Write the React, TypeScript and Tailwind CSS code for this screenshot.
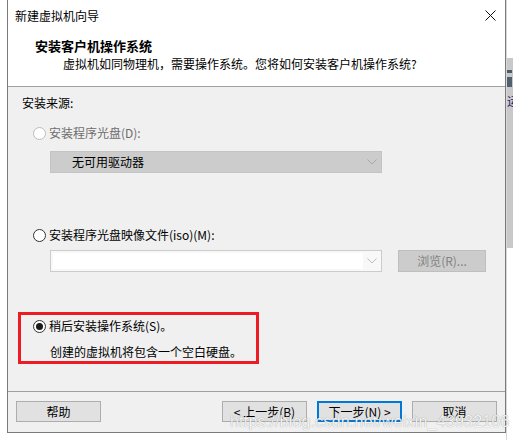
import React from 'react';

const font = "font-['Microsoft_YaHei_UI','Noto_Sans_CJK_SC',sans-serif]";

function Radio({ checked, disabled }: { checked?: boolean; disabled?: boolean }) {
  return (
    <span
      className={`flex h-[13px] w-[13px] shrink-0 items-center justify-center rounded-full border bg-white ${
        disabled ? 'border-[#bcbcbc]' : 'border-[#333333]'
      }`}
    >
      {checked && <span className="h-[7px] w-[7px] rounded-full bg-[#1a1a1a]" />}
    </span>
  );
}

function Chevron({ color }: { color: string }) {
  return (
    <svg width="10" height="6" viewBox="0 0 10 6" fill="none">
      <path d="M0.5 0.5 L5 5 L9.5 0.5" stroke={color} strokeWidth="1" />
    </svg>
  );
}

function Button({ label, primary }: { label: string; primary?: boolean }) {
  return (
    <div
      className={`flex h-[21px] w-[85px] items-center justify-center bg-[#e1e1e1] text-[12px] text-black ${
        primary ? 'border-2 border-[#0078d7]' : 'border border-[#adadad]'
      }`}
    >
      {label}
    </div>
  );
}

export default function App() {
  return (
    <div className={`relative flex h-[440px] w-[513px] overflow-hidden bg-white ${font}`}>
      <div className="w-[7px] shrink-0 bg-white" />

      {/* wizard window */}
      <div className="flex h-[433px] w-[499px] shrink-0 flex-col border-x border-b border-[#7a7a7a] bg-white">
        {/* title bar */}
        <div className="flex h-[31px] items-center justify-between pl-[7px] pr-[9px]">
          <span className="text-[12px] text-black">新建虚拟机向导</span>
          <svg width="11" height="11" viewBox="0 0 11 11" fill="none">
            <path d="M0.5 0.5 L10.5 10.5 M10.5 0.5 L0.5 10.5" stroke="#111" strokeWidth="1" />
          </svg>
        </div>

        {/* header */}
        <div className="flex h-[56px] flex-col border-b border-[#a0a0a0] pt-[5px]">
          <div className="flex h-[20px] items-center pl-[27px] text-[13px] font-bold text-black">
            安装客户机操作系统
          </div>
          <div className="flex h-[16px] items-center pl-[55px] text-[12px] text-black">
            虚拟机如同物理机，需要操作系统。您将如何安装客户机操作系统?
          </div>
        </div>

        {/* body */}
        <div className="flex flex-1 flex-col bg-[#f0f0f0] text-[12px]">
          <div className="flex h-[32px] items-center pl-[14px] text-black">安装来源:</div>

          <div className="flex h-[28px] items-center gap-[3px] pl-[25px] text-[#6d6d6d]">
            <Radio disabled />
            <span>安装程序光盘(D):</span>
          </div>
          <div className="ml-[42px] mt-[4px] flex h-[22px] w-[332px] items-center justify-between border border-[#c4c4c4] bg-[#cccccc] pl-[21px] pr-[4px] text-black">
            <span>无可用驱动器</span>
            <Chevron color="#a8a8a8" />
          </div>

          <div className="mt-[49px] flex h-[26px] items-center gap-[3px] pl-[25px] text-black">
            <Radio />
            <span>安装程序光盘映像文件(iso)(M):</span>
          </div>
          <div className="mt-[2px] flex items-center pl-[42px]">
            <div className="flex h-[22px] w-[332px] items-center border border-[#cccccc] bg-[#f8f8f8] pl-[2px] pr-[4px]">
              <div className="h-[16px] w-[310px] bg-white" />
              <div className="flex flex-1 justify-end">
                <Chevron color="#bdbdbd" />
              </div>
            </div>
            <div className="ml-[16px] flex h-[22px] w-[88px] items-center justify-center border border-[#bfbfbf] bg-[#cccccc] text-[#838383]">
              浏览(R)...
            </div>
          </div>

          <div className="ml-[10px] mt-[40px] flex h-[52px] w-[241px] flex-col border-[3px] border-[#ed1c24]">
            <div className="flex h-[22px] items-center gap-[3px] pl-[12px] text-black">
              <Radio checked />
              <span>稍后安装操作系统(S)。</span>
            </div>
            <div className="mt-[6px] flex h-[18px] items-center pl-[29px] text-black">
              创建的虚拟机将包含一个空白硬盘。
            </div>
          </div>
        </div>

        {/* footer */}
        <div className="flex h-[41px] items-start justify-between border-t border-[#a0a0a0] bg-[#f0f0f0] px-[8px] pt-[9px]">
          <Button label="帮助" />
          <div className="flex gap-[10px]">
            <Button label="< 上一步(B)" />
            <Button label="下一步(N) >" primary />
            <Button label="取消" />
          </div>
        </div>
      </div>

      {/* background behind the window */}
      <div className="flex flex-1 flex-col border-l border-[#d8d8d8] bg-white">
        <div className="h-[58px]" />
        <div className="flex h-[190px] flex-col bg-[#c9c9c9] pt-[12px]">
          <div className="h-[3px] w-[5px] bg-[#4b5b6b]" />
          <div className="mt-[4px] h-[10px] w-[5px] bg-[#51606e]" />
          <div className="mt-[8px] text-[12px] leading-none text-[#2d1a6e]">运</div>
        </div>
      </div>

      {/* csdn watermark */}
      <div className="absolute left-[230px] top-[410px] font-['Liberation_Sans',sans-serif] text-[16px] tracking-[0.2px] text-white/90 [text-shadow:0_0_1px_rgba(0,0,0,0.45)]">
        https://blog.csdn.net/weixin_43932106
      </div>
    </div>
  );
}
